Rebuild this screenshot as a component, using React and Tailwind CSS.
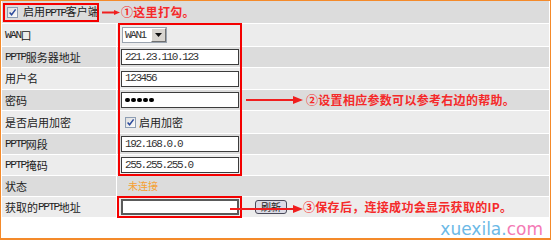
import React from "react";

const MONO = "font-['Liberation_Mono',monospace] text-[11px] tracking-[-1.4px]";

function M({ children }) {
  return <span className={MONO}>{children}</span>;
}

function Check() {
  return (
    <span className="w-[11px] h-[11px] shrink-0 border border-[#8d9db3] bg-linear-to-br from-[#dedede] to-[#fbfbfb] flex items-center justify-center">
      <svg width="9" height="9" viewBox="0 0 9 9">
        <path d="M1.6 4.4 L3.6 6.8 L7.6 1.4" stroke="#2b4a9c" strokeWidth="1.5" fill="none" />
      </svg>
    </span>
  );
}

function Arrow({ w, head = 10, hh = 8 }) {
  const h = hh + 2;
  const c = h / 2;
  return (
    <svg width={w} height={h} viewBox={`0 0 ${w} ${h}`} className="shrink-0 block">
      <line x1="0" y1={c} x2={w - head + 1} y2={c} stroke="#f01e1e" strokeWidth="2" />
      <polygon points={`${w - head},${c - hh / 2} ${w},${c} ${w - head},${c + hh / 2}`} fill="#f01e1e" />
    </svg>
  );
}

function Row({ h, dark, label, children }) {
  const bg = dark ? "bg-[#dcdcdc]" : "bg-[#ececec]";
  return (
    <div className={`flex shrink-0 gap-[1px] ${h}`}>
      <div className={`w-[114px] shrink-0 flex items-center pl-[3px] text-[11px] leading-none whitespace-nowrap ${bg}`}>
        {label}
      </div>
      <div className={`flex-1 flex items-center pl-[4px] ${bg}`}>{children}</div>
    </div>
  );
}

function Input({ children, thick }) {
  return (
    <div
      className={`w-[118px] h-[16px] shrink-0 bg-white flex items-center pl-[3px] text-[#333] leading-none ${
        thick ? "border-2 border-[#5a5a5a]" : "border border-[#3c3c3c]"
      }`}
    >
      {children}
    </div>
  );
}

const NOTE = "text-[#f52a2a] text-[12px] font-bold leading-none tracking-[0.3px] whitespace-nowrap";

export default function App() {
  return (
    <div className="w-[551px] h-[240px] bg-white">
      <div className="relative w-[551px] h-[240px] border border-b-2 border-[#f48a2a] px-[1px] flex flex-col gap-[1px] bg-white font-['Noto_Sans_CJK_SC',sans-serif] text-[#222]">
        {/* header row */}
        <div className="h-[22px] shrink-0 bg-[#dcdcdc] flex items-center pl-[5px]">
          <div className="w-[95px] shrink-0 flex items-center gap-[5px]">
            <Check />
            <span className="text-[11px] leading-none whitespace-nowrap">
              启用<M>PPTP</M>客户端
            </span>
          </div>
          <Arrow w={18} head={6} hh={5} />
          <span className={`${NOTE} ml-[1px]`}>①这里打勾。</span>
        </div>

        <Row h="h-[22px]" label={<><M>WAN</M>口</>}>
          <div className="ml-[1px] w-[45px] h-[16px] bg-white border border-[#9aa4b0] flex items-center justify-between">
            <span className={`${MONO} text-[#333] leading-none pl-[2px]`}>WAN1</span>
            <span className="w-[15px] h-[14px] bg-[#d8d5d0] border border-t-white border-l-white border-b-[#707070] border-r-[#707070] flex items-center justify-center">
              <svg width="7" height="4" viewBox="0 0 7 4">
                <polygon points="0,0 7,0 3.5,4" fill="#111" />
              </svg>
            </span>
          </div>
        </Row>

        <Row h="h-[20px]" dark label={<><M>PPTP</M>服务器地址</>}>
          <Input>
            <span className={MONO}>221.23.110.123</span>
          </Input>
        </Row>

        <Row h="h-[21px]" label="用户名">
          <Input>
            <span className={MONO}>123456</span>
          </Input>
        </Row>

        <Row h="h-[20px]" dark label="密码">
          <Input>
            <div className="flex gap-[1.5px]">
              <span className="w-[4.5px] h-[4.5px] rounded-full bg-black" />
              <span className="w-[4.5px] h-[4.5px] rounded-full bg-black" />
              <span className="w-[4.5px] h-[4.5px] rounded-full bg-black" />
              <span className="w-[4.5px] h-[4.5px] rounded-full bg-black" />
              <span className="w-[4.5px] h-[4.5px] rounded-full bg-black" />
            </div>
          </Input>
          <div className="ml-[7px]">
            <Arrow w={57} head={10} hh={8} />
          </div>
          <span className={`${NOTE} ml-[3px]`}>②设置相应参数可以参考右边的帮助。</span>
        </Row>

        <Row h="h-[22px]" label="是否启用加密">
          <div className="ml-[4px] flex items-center gap-[3px]">
            <Check />
            <span className="text-[11px] leading-none">启用加密</span>
          </div>
        </Row>

        <Row h="h-[20px]" dark label={<><M>PPTP</M>网段</>}>
          <Input>
            <span className={MONO}>192.168.0.0</span>
          </Input>
        </Row>

        <Row h="h-[20px]" label={<><M>PPTP</M>掩码</>}>
          <Input>
            <span className={MONO}>255.255.255.0</span>
          </Input>
        </Row>

        <Row h="h-[20px]" dark label="状态">
          <span className="ml-[7px] text-[10px] leading-none text-[#f5a033]">未连接</span>
        </Row>

        <Row h="h-[20px]" label={<>获取的<M>PPTP</M>地址</>}>
          <Input thick />
          <div className="ml-[16px] w-[32px] h-[14px] rounded-[3px] border border-[#4a4a5a] bg-[#dcdce6] flex items-center justify-center text-[10px] leading-none text-[#222]">
            刷新
          </div>
          <span className={`${NOTE} ml-[16px]`}>③保存后，连接成功会显示获取的IP。</span>
        </Row>

        <div className="flex-1 flex items-end justify-end pr-[6px]">
          <span className="font-['DejaVu_Sans',sans-serif] text-[17px] leading-none whitespace-nowrap">
            <span className="text-[#6cb9e6]">xuexila.</span>
            <span className="text-[#f47ab5]">com</span>
          </span>
        </div>

        {/* annotation overlays */}
        <div className="absolute left-[2px] top-[2px] w-[96px] h-[19px] border-2 border-[#f40000] pointer-events-none" />
        <div className="absolute left-[117px] top-[22px] w-[124px] h-[153px] border-2 border-[#f40000] pointer-events-none" />
        <div className="absolute left-[116px] top-[195px] w-[125px] h-[22px] border-2 border-[#f40000] pointer-events-none" />
        <div className="absolute left-[229px] top-[203px]">
          <Arrow w={73} head={10} hh={8} />
        </div>
      </div>
    </div>
  );
}
